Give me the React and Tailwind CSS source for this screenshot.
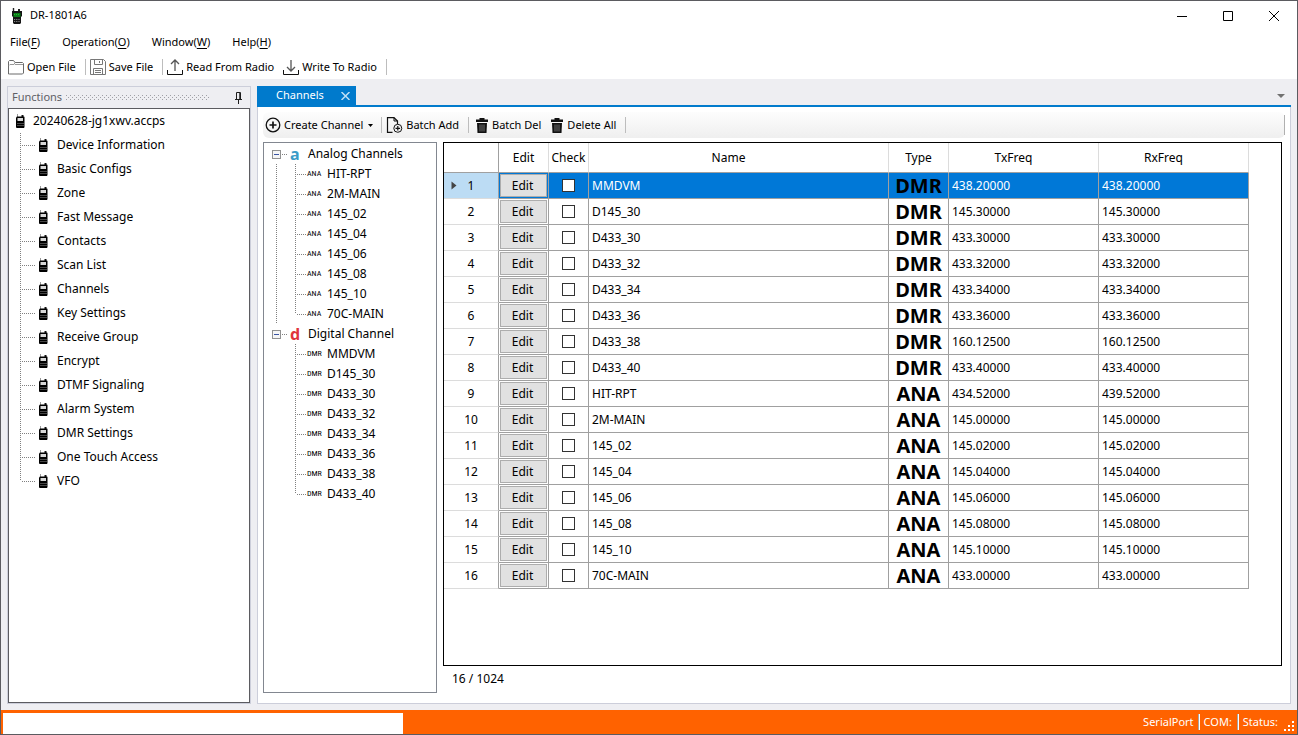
import React from "react";

const functions = [
  "Device Information", "Basic Configs", "Zone", "Fast Message", "Contacts",
  "Scan List", "Channels", "Key Settings", "Receive Group", "Encrypt",
  "DTMF Signaling", "Alarm System", "DMR Settings", "One Touch Access", "VFO",
];

const analog = ["HIT-RPT", "2M-MAIN", "145_02", "145_04", "145_06", "145_08", "145_10", "70C-MAIN"];
const digital = ["MMDVM", "D145_30", "D433_30", "D433_32", "D433_34", "D433_36", "D433_38", "D433_40"];

const channels = [
  ["MMDVM", "DMR", "438.20000", "438.20000"],
  ["D145_30", "DMR", "145.30000", "145.30000"],
  ["D433_30", "DMR", "433.30000", "433.30000"],
  ["D433_32", "DMR", "433.32000", "433.32000"],
  ["D433_34", "DMR", "433.34000", "433.34000"],
  ["D433_36", "DMR", "433.36000", "433.36000"],
  ["D433_38", "DMR", "160.12500", "160.12500"],
  ["D433_40", "DMR", "433.40000", "433.40000"],
  ["HIT-RPT", "ANA", "434.52000", "439.52000"],
  ["2M-MAIN", "ANA", "145.00000", "145.00000"],
  ["145_02", "ANA", "145.02000", "145.02000"],
  ["145_04", "ANA", "145.04000", "145.04000"],
  ["145_06", "ANA", "145.06000", "145.06000"],
  ["145_08", "ANA", "145.08000", "145.08000"],
  ["145_10", "ANA", "145.10000", "145.10000"],
  ["70C-MAIN", "ANA", "433.00000", "433.00000"],
];

function RadioIcon() {
  return (
    <svg width="10" height="14" viewBox="0 0 10 14" className="shrink-0" aria-hidden="true">
      <path d="M2.500 0v4" stroke="#999" />
      <path d="M6.500 1h2v3h-2z" fill="#111" />
      <path d="M1 3.500l1-1h7l.5.500V13l-.5 1H1.500L1 13z" fill="#000" />
      <path d="M2.500 4h5.500v3H2.500z" fill="#d8d8d8" />
      <path d="M2 9.500h7M2 11.500h7" stroke="#777" strokeWidth=".6" />
    </svg>
  );
}

function AppIcon() {
  return (
    <svg width="10" height="16" viewBox="0 0 10 16" className="shrink-0" aria-hidden="true">
      <path d="M1.500 0v4" stroke="#222" strokeWidth="1.400" />
      <path d="M6 1h2v3H6z" fill="#222" />
      <path d="M0 3h10v5l-1 1v6l-1 1H2l-1-1V9L0 8z" fill="#151515" />
      <path d="M1.500 5h7v4h-7z" fill="#0a7d16" />
      <path d="M2 6.500h6" stroke="#26b634" strokeDasharray="1 1" />
      <path d="M2 11.500h6M2 13.500h6" stroke="#888" strokeDasharray="1.200 1" />
    </svg>
  );
}

function FolderIcon() {
  return (
    <svg width="16" height="15" viewBox="0 0 16 15" fill="none" stroke="#6a6a6a" aria-hidden="true">
      <path d="M.5 14V1.500l1-1h4l1.500 2h7.500l1 1V13l-1 1H1.500z" />
      <path d="M1 5.500l1-1h4l1-2M7 4.500h8" stroke="#999" />
    </svg>
  );
}

function SaveIcon() {
  return (
    <svg width="16" height="16" viewBox="0 0 16 16" fill="none" stroke="#777" aria-hidden="true">
      <path d="M.5.5h13l2 2v13H.5z" />
      <path d="M4.500.500v5h8v-5M9.500 2v2M3.500 15.500v-6h9v6M5 11.500h6M5 13.500h6" />
    </svg>
  );
}

function ArrowIcon({ up }) {
  return (
    <svg width="16" height="16" viewBox="0 0 16 16" fill="none" aria-hidden="true">
      <path d={up ? "M8 12V1M4 5l4-4 4 4" : "M8 1v11M4 8l4 4 4-4"} stroke="#555" strokeWidth="1.300" />
      <path d="M.5 11v4.500h15V11" stroke="#111" />
    </svg>
  );
}

function CreateIcon() {
  return (
    <svg width="16" height="16" viewBox="0 0 16 16" fill="none" stroke="#111" aria-hidden="true">
      <circle cx="8" cy="8" r="6.800" strokeWidth="1.300" />
      <path d="M8 4.500v7M4.500 8h7" strokeWidth="1.700" />
    </svg>
  );
}

function BatchAddIcon() {
  return (
    <svg width="17" height="16" viewBox="0 0 17 16" fill="none" stroke="#111" aria-hidden="true">
      <path d="M6.500 15.300H1.500V.700h6.500L11.500 4v3" strokeWidth="1.200" />
      <path d="M8 .700V4h3.500" />
      <circle cx="11.800" cy="11.300" r="4" />
      <path d="M11.800 9v4.600M9.500 11.300h4.600" strokeWidth="1.200" />
    </svg>
  );
}

function TrashIcon() {
  return (
    <svg width="14" height="15" viewBox="0 0 14 15" aria-hidden="true">
      <path d="M4.500 0h5v1.500H13V4H1V1.500h3.500z" fill="#111" />
      <path d="M2 5h10l-.5 10h-9z" fill="#111" />
      <path d="M5 6.500v7M7 6.500v7M9 6.500v7" stroke="#888" strokeWidth=".8" />
    </svg>
  );
}

const Divider = () => <span className="h-4 w-px bg-[#bdbdbd]" />;

function Connector({ last, width }) {
  return (
    <span className="flex h-full shrink-0" aria-hidden="true">
      <span
        className={
          (last ? "h-1/2" : "h-full") +
          " w-px bg-[repeating-linear-gradient(180deg,#808080_0_1px,transparent_1px_2px)]"
        }
      />
      <span
        className={width + " h-px self-center bg-[repeating-linear-gradient(90deg,transparent_0_1px,#808080_1px_2px)]"}
      />
    </span>
  );
}

function Group({ letter, color, label, tag, items, open }) {
  return (
    <li>
      <button type="button" className="flex h-5 items-center">
        <svg width="9" height="9" viewBox="0 0 9 9" className="ml-2" aria-hidden="true">
          <rect x=".5" y=".5" width="8" height="8" fill="#f6f6f6" stroke="#919191" />
          <path d="M2 4.500h5" stroke="#3a55a4" />
        </svg>
        <span className="ml-px h-px w-1.5 bg-[repeating-linear-gradient(90deg,#808080_0_1px,transparent_1px_2px)]" />
        <span className={"ml-0.5 w-[18px] text-left text-base leading-5 font-bold " + color}>{letter}</span>
        <span>{label}</span>
      </button>
      <div className="flex">
        <span
          className={
            (open ? "bg-[repeating-linear-gradient(180deg,#808080_0_1px,transparent_1px_2px)] " : "") + "ml-3 w-px"
          }
        />
        <ul className="ml-[18px]">
          {items.map((name, i) => (
            <li key={name} className="flex h-5 items-center">
              <Connector last={i === items.length - 1} width="w-2.5" />
              <span className="ml-px w-5 font-['Roboto_Condensed','Liberation_Sans_Narrow','Liberation_Sans',sans-serif] text-[8px] leading-5">
                {tag}
              </span>
              <span>{name}</span>
            </li>
          ))}
        </ul>
      </div>
    </li>
  );
}

const headCell = "border-r border-b border-r-[#dcdcdc] border-b-[#a0a0a0] p-0 font-normal";
const cell = "border-r border-b border-[#a0a0a0] py-0";

export default function App() {
  return (
    <div className="flex min-h-screen flex-col border border-[#5b5b60] bg-white font-['Noto_Sans','Open_Sans',sans-serif] text-[11px] text-black">
      <header className="flex h-[29px] items-center pl-[11px]">
        <AppIcon />
        <h1 className="ml-2">DR-1801A6</h1>
        <div className="ml-auto flex items-center gap-9 pr-[18px]">
          <button type="button" aria-label="Minimize">
            <svg width="10" height="10" stroke="#000"><path d="M0 5.500h10" /></svg>
          </button>
          <button type="button" aria-label="Maximize">
            <svg width="10" height="10" fill="none" stroke="#000"><path d="M.5.5h9v9h-9z" /></svg>
          </button>
          <button type="button" aria-label="Close">
            <svg width="10" height="10" stroke="#000"><path d="M0 0l10 10M10 0L0 10" /></svg>
          </button>
        </div>
      </header>

      <nav className="flex h-[25px] items-center gap-[22px] pl-[9px]">
        {[["File", "F"], ["Operation", "O"], ["Window", "W"], ["Help", "H"]].map(([name, key]) => (
          <button type="button" key={name}>
            {name}(<u className="underline-offset-2">{key}</u>)
          </button>
        ))}
      </nav>

      <div className="flex h-6 items-center pl-[7px]">
        <button type="button" className="flex items-center gap-[3px]"><FolderIcon />Open File</button>
        <span className="ml-[9px] flex items-center gap-1">
          <Divider />
          <button type="button" className="flex items-center gap-[3px]"><SaveIcon />Save File</button>
        </span>
        <span className="ml-[9px] flex items-center gap-1">
          <Divider />
          <button type="button" className="flex items-center gap-[3px]"><ArrowIcon up />Read From Radio</button>
        </span>
        <button type="button" className="mx-[9px] flex items-center gap-[3px]"><ArrowIcon />Write To Radio</button>
        <Divider />
      </div>

      <main className="flex flex-1 gap-1.5 bg-[#eeeef2] px-1.5 pt-[7px] pb-[6px]">
        <aside className="flex w-[244px] shrink-0 flex-col border border-[#ccceda]">
          <div className="flex h-[21px] items-center pr-[7px] pl-1 text-[#606066]">
            <h2>Functions</h2>
            <span className="ml-1 h-[5px] flex-1 bg-[radial-gradient(circle_at_0.5px_0.5px,#a0a0a6_0.5px,transparent_1px),radial-gradient(circle_at_2.5px_2.5px,#a0a0a6_0.5px,transparent_1px)] bg-size-[4px_4px]" />
            <button type="button" aria-label="Pin" className="ml-6">
              <svg width="9" height="12" viewBox="0 0 9 12" fill="none" stroke="#1e1e1e">
                <path d="M2.500 7V.500h4V7M1 7.500h7M4.500 8v4" />
                <path d="M6 1v6" strokeWidth="1.500" />
              </svg>
            </button>
          </div>
          <div className="flex-1 border border-[#5b5b60] bg-white text-xs">
            <div className="flex h-6 items-center gap-2 pl-1.5">
              <RadioIcon />20240628-jg1xwv.accps
            </div>
            <ul className="pl-[11px]">
              {functions.map((name, i) => (
                <li key={name} className="flex h-6 items-center">
                  <Connector last={i === functions.length - 1} width="w-3.5" />
                  <a href="#" className="ml-[3px] flex items-center gap-[9px]"><RadioIcon />{name}</a>
                </li>
              ))}
            </ul>
          </div>
        </aside>

        <section className="flex min-w-0 flex-1 flex-col">
          <div className="flex h-[21px] items-center border-b-2 border-[#007acc]">
            <button type="button" className="flex h-full w-[99px] items-center justify-between bg-[#007acc] pr-1.5 pl-[19px] text-white">
              Channels
              <svg width="9" height="8" viewBox="0 0 9 8" stroke="#bfe0f5" strokeWidth="1.500" aria-hidden="true">
                <path d="M.5 0l8 8M8.500 0l-8 8" />
              </svg>
            </button>
            <svg width="8" height="4" className="mr-1.5 ml-auto" aria-hidden="true"><path d="M0 0h8L4 4z" fill="#717171" /></svg>
          </div>
          <div className="flex flex-1 flex-col border border-t-0 border-[#ccceda] bg-white px-[5px] pt-[5px] pb-2.5">
            <div className="mb-1 flex h-[26px] items-center rounded-md bg-linear-to-b from-[#fdfdfd] to-[#efefef] pl-0.5">
              <button type="button" className="flex items-center gap-[3px]">
                <CreateIcon />Create Channel
                <svg width="5" height="3" className="ml-0.5"><path d="M0 0h5L2.500 3z" /></svg>
              </button>
              <span className="ml-2 flex items-center gap-1">
                <Divider />
                <button type="button" className="flex items-center gap-[3px]"><BatchAddIcon />Batch Add</button>
              </span>
              <span className="ml-[9px] flex items-center gap-1.5">
                <Divider />
                <button type="button" className="flex items-center gap-[3px]"><TrashIcon />Batch Del</button>
              </span>
              <button type="button" className="mx-[9px] flex items-center gap-[3px]"><TrashIcon />Delete All</button>
              <Divider />
              <span className="ml-auto h-5 w-px bg-[#b0b0b0]" />
            </div>

            <div className="flex flex-1 gap-1.5 text-xs">
              <ul className="w-[174px] shrink-0 border border-[#828790] pt-px">
                <Group open letter="a" color="text-[#3b9cc8]" label="Analog Channels" tag="ANA" items={analog} />
                <Group letter="d" color="text-[#e0343c]" label="Digital Channel" tag="DMR" items={digital} />
              </ul>

              <div className="flex min-w-0 flex-1 flex-col pr-[3px]">
                <div className="flex-1 border border-black">
                  <table className="w-[805px] table-fixed border-separate border-spacing-0">
                    <colgroup>
                      <col className="w-[55px]" />
                      <col className="w-[50px]" />
                      <col className="w-10" />
                      <col className="w-[300px]" />
                      <col className="w-[60px]" />
                      <col className="w-[150px]" />
                      <col className="w-[150px]" />
                    </colgroup>
                    <thead>
                      <tr className="h-[30px]">
                        <th className="border-r border-b border-[#a0a0a0] p-0" />
                        {["Edit", "Check", "Name", "Type", "TxFreq", "RxFreq"].map((h) => (
                          <th key={h} className={headCell + (h === "Name" ? " pr-5" : h === "RxFreq" || h === "TxFreq" ? " pr-5" : "")}>
                            {h}
                          </th>
                        ))}
                      </tr>
                    </thead>
                    <tbody>
                      {channels.map(([name, type, tx, rx], i) => {
                        const on = i === 0;
                        return (
                          <tr key={name} className={on ? "h-[26px] bg-[#0078d7] text-white" : "h-[26px]"}>
                            <th
                              scope="row"
                              className={
                                "border-r border-b border-r-[#a0a0a0] border-b-[#dcdcdc] p-0 font-normal text-black " +
                                (on ? "bg-[#bcdcf4]" : "bg-white")
                              }
                            >
                              <span className="flex items-center pl-[7px]">
                                <svg width="6" height="9" aria-hidden="true">
                                  {on && <path d="M.5.500L5.500 4.500.500 8.500z" fill="#444" />}
                                </svg>
                                <span className="w-7 text-center">{i + 1}</span>
                              </span>
                            </th>
                            <td className={cell + " p-px"}>
                              <button
                                type="button"
                                className="block h-[23px] w-full border border-[#adadad] bg-[#e1e1e1] pr-0.5 text-black"
                              >
                                Edit
                              </button>
                            </td>
                            <td className={cell + " px-0"}>
                              <input
                                type="checkbox"
                                aria-label={"Check " + name}
                                className="mx-auto block size-[13px] appearance-none border border-[#333] bg-white"
                              />
                            </td>
                            <td className={cell + " px-[3px]"}>{name}</td>
                            <td className={cell + " px-0 text-center text-xl leading-6 font-bold text-black"}>{type}</td>
                            <td className={cell + " px-[3px]"}>{tx}</td>
                            <td className={cell + " px-[3px]"}>{rx}</td>
                          </tr>
                        );
                      })}
                    </tbody>
                  </table>
                </div>
                <p className="h-[27px] pl-[9px] leading-[26px]">16 / 1024</p>
              </div>
            </div>
          </div>
        </section>
      </main>

      <footer className="flex h-6 items-center justify-between bg-[#ff6200] text-white">
        <div className="mt-[3px] ml-0.5 h-[21px] w-[400px] bg-white" />
        <div className="flex items-center gap-1 pr-0.5">
          <span>SerialPort</span>
          <span className="h-4 w-0.5 border-l border-[#a5a5a5] bg-white" />
          <span>COM:</span>
          <span className="ml-px h-4 w-0.5 border-l border-[#a5a5a5] bg-white" />
          <span>Status:</span>
          <svg width="11" height="11" viewBox="0 0 11 11" fill="#fff" className="mt-2 ml-0.5" aria-hidden="true">
            <path d="M8 0h2v2H8zM4 4h2v2H4zM8 4h2v2H8zM0 8h2v2H0zM4 8h2v2H4zM8 8h2v2H8z" />
          </svg>
        </div>
      </footer>
    </div>
  );
}
